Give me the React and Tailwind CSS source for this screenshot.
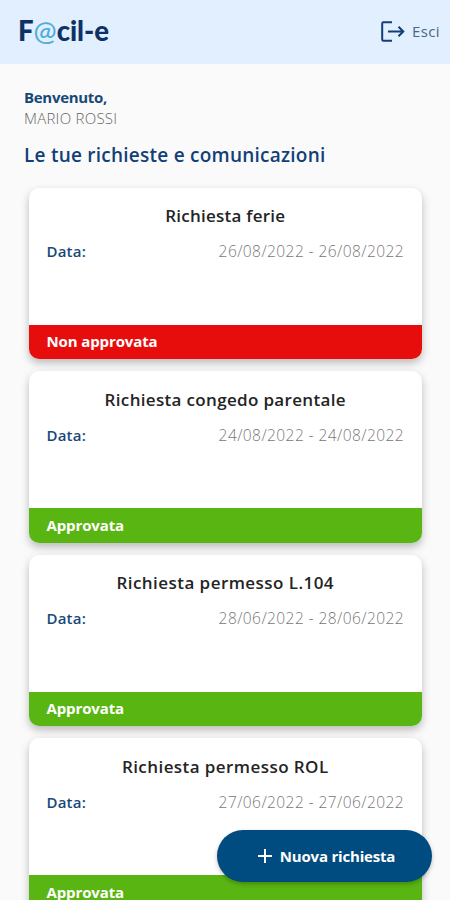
const requests = [
    { title: 'Richiesta ferie', date: '26/08/2022 - 26/08/2022', approved: false, spacing: 'tracking-[0.25px]' },
    { title: 'Richiesta congedo parentale', date: '24/08/2022 - 24/08/2022', approved: true, spacing: 'tracking-[0.33px]' },
    { title: 'Richiesta permesso L.104', date: '28/06/2022 - 28/06/2022', approved: true, spacing: 'tracking-[0.45px]' },
    { title: 'Richiesta permesso ROL', date: '27/06/2022 - 27/06/2022', approved: true, spacing: 'tracking-[0.43px]' },
];

function LogoutIcon() {
    return (
        <svg width="24" height="22" viewBox="0 0 24 22" fill="none" stroke="#123f78" strokeWidth="2">
            <path d="M11 1.2H2.4Q1.2 1.2 1.2 2.4V18.6Q1.2 19.8 2.4 19.8H11" />
            <path d="M7 10.5H22M17.5 5.7L22.3 10.5L17.5 15.3" />
        </svg>
    );
}

function RequestCard({ title, date, approved, spacing }) {
    return (
        <article className="h-[171.5px] shrink-0 overflow-hidden rounded-[10px] bg-white shadow-[0_4px_8px_rgba(0,0,0,0.26)]">
            <div className="h-[137px] pt-[16.6px] pr-[18px] pl-[17.5px]">
                <h2 className={`text-center text-[17px] leading-6 font-semibold text-[#242424] ${spacing}`}>{title}</h2>
                <div className="mt-[11px] flex items-center justify-between leading-6">
                    <span className="text-[15px] font-semibold tracking-[0.2px] text-[#174878]">Data:</span>
                    <span className="text-[15.5px] font-light tracking-[0.42px] text-[#777]">{date}</span>
                </div>
            </div>
            <div
                className={`flex h-[34.5px] items-center pb-px pl-[17.5px] text-[15px] leading-4 font-bold tracking-[-0.12px] text-white ${
                    approved ? 'bg-[#59b512]' : 'bg-[#e70d0d]'
                }`}
            >
                {approved ? 'Approvata' : 'Non approvata'}
            </div>
        </article>
    );
}

export default function App() {
    return (
        <div className="relative h-[900px] w-[450px] overflow-hidden bg-[#fafafa] font-['Open_Sans',sans-serif]">
            <header className="flex h-16 items-center justify-between bg-[#e1efff] pr-[10px] pl-[18px]">
                <div className="pb-[3px] font-['Lato',sans-serif] text-[27.5px] leading-8 font-black text-[#0e3265]">
                    F<span className="font-medium text-[#4faddd]">@</span>cil-e
                </div>
                <button className="flex items-center gap-[7px] pb-px text-[15px] font-medium tracking-[0.4px] text-[#486584]">
                    <LogoutIcon />
                    Esci
                </button>
            </header>

            <main>
                <div className="px-6 pt-[23px]">
                    <p className="text-[15px] leading-[21px] font-bold tracking-[-0.3px] text-[#174878]">Benvenuto,</p>
                    <p className="text-[15px] leading-[21px] font-light tracking-[0.25px] text-[#666]">MARIO ROSSI</p>
                    <h1 className="mt-[13px] text-[19px] leading-[26px] font-semibold tracking-[0.24px] text-[#123f78]">
                        Le tue richieste e comunicazioni
                    </h1>
                </div>
                <div className="mt-[19.5px] flex flex-col gap-3 pr-[28px] pl-[29px]">
                    {requests.map((request) => (
                        <RequestCard key={request.title} {...request} />
                    ))}
                </div>
            </main>

            <button className="absolute right-[18px] bottom-[18px] flex h-[52px] w-[215px] items-center justify-center gap-2 rounded-full bg-[#004b80] pl-1 text-[15px] font-bold tracking-[-0.2px] text-white shadow-[0_2px_4px_rgba(0,0,0,0.25)]">
                <svg width="14" height="14" viewBox="0 0 14 14" stroke="currentColor" strokeWidth="2">
                    <path d="M7 0V14M0 7H14" />
                </svg>
                Nuova richiesta
            </button>
        </div>
    );
}
